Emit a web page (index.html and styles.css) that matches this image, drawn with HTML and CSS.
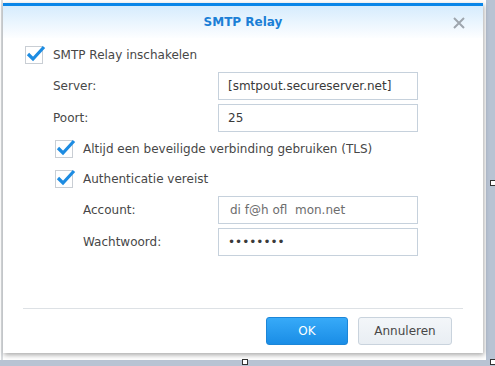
FILE: index.html
```html
<!DOCTYPE html>
<html lang="nl">
<head>
  <meta charset="UTF-8">
  <title>SMTP Relay</title>
  <link rel="stylesheet" href="styles.css">
</head>
<body>

<div class="desk">
  <!-- venster -->
  <div class="dialog">
    <div class="dialog-head">
      <span class="dialog-title">SMTP Relay</span>
      <span class="close">
        <svg width="14" height="14" viewBox="0 0 14 14"><path d="M2 2 L12 12 M12 2 L2 12" stroke="#9ea6ae" stroke-width="2" fill="none"/></svg>
      </span>
    </div>

    <div class="dialog-body">
      <label class="check-row">
        <span class="check"><svg width="22" height="20" viewBox="0 0 22 20"><path d="M3 10 L8 15 L19 3" stroke="#1d8ce2" stroke-width="3.2" fill="none"/></svg></span>
        SMTP Relay inschakelen
      </label>

      <div class="field first">
        <span class="field-label">Server:</span>
        <input class="field-input" type="text" value="[smtpout.secureserver.net]">
      </div>
      <div class="field">
        <span class="field-label">Poort:</span>
        <input class="field-input" type="text" value="25">
      </div>

      <label class="check-row sub tls">
        <span class="check"><svg width="22" height="20" viewBox="0 0 22 20"><path d="M3 10 L8 15 L19 3" stroke="#1d8ce2" stroke-width="3.2" fill="none"/></svg></span>
        Altijd een beveiligde verbinding gebruiken (TLS)
      </label>
      <label class="check-row sub auth">
        <span class="check"><svg width="22" height="20" viewBox="0 0 22 20"><path d="M3 10 L8 15 L19 3" stroke="#1d8ce2" stroke-width="3.2" fill="none"/></svg></span>
        Authenticatie vereist
      </label>

      <div class="field sub first">
        <span class="field-label">Account:</span>
        <input class="field-input blur" type="text" value="di f@h ofl  mon.net">
      </div>
      <div class="field sub">
        <span class="field-label">Wachtwoord:</span>
        <input class="field-input" type="text" value="••••••••">
      </div>
    </div>

    <div class="dialog-foot">
      <button class="btn btn-ok">OK</button>
      <button class="btn btn-cancel">Annuleren</button>
    </div>
  </div>

  <span class="handle h-mid"></span>
  <span class="handle h-right"></span>
  <span class="handle h-side"></span>
</div>

</body>
</html>
```

FILE: styles.css
```css
body {
  margin: 0;
  font-family: "DejaVu Sans", Verdana, sans-serif;
  font-size: 12px;
  color: #474747;
}
.desk {
  position: relative;
  width: 495px;
  height: 366px;
  overflow: hidden;
  box-sizing: border-box;
  padding: 3px 12px 0 3px;
  background:
    linear-gradient(#b8c3d3, #b8c3d3) right top / 9px 100% no-repeat,
    linear-gradient(#b8c3d3, #b8c3d3) left bottom / 100% 6px no-repeat,
    linear-gradient(#d9dcdf, #d9dcdf) 1px 0 / 2px 100% no-repeat,
    #fff;
}
.dialog {
  width: 480px;
  height: 350px;
  background: #fff;
  display: flex;
  flex-direction: column;
  box-shadow: 1px 2px 5px rgba(0, 0, 0, 0.35);
}
.dialog-head {
  position: relative;
  height: 32px;
  border-top: 3px solid #0a86e8;
  background: linear-gradient(#d6ecfd, #fdfeff);
  display: flex;
  align-items: center;
  justify-content: center;
}
.dialog-title {
  font-weight: bold;
  color: #1b7fd6;
  font-size: 12px;
  margin-left: 0;
}
.close {
  position: absolute;
  right: 17px;
  top: 10px;
  width: 14px;
  height: 14px;
}
.dialog-body {
  flex: 1;
  padding: 8px 0 0 22px;
}
.check-row {
  display: flex;
  align-items: center;
  height: 18px;
  gap: 10px;
}
.check {
  position: relative;
  width: 16px;
  height: 16px;
  border: 1px solid #c9ced4;
  background: #fff;
  flex: none;
}
.check svg {
  position: absolute;
  left: -1px;
  top: -3px;
}
.check-row.sub {
  padding-left: 30px;
}
.check-row.tls {
  margin-top: 8px;
}
.check-row.auth {
  margin-top: 12px;
}
.field {
  display: flex;
  align-items: center;
  height: 28px;
  margin-top: 4px;
  padding-left: 28px;
}
.field.first {
  margin-top: 8px;
}
.field-label {
  width: 165px;
  flex: none;
}
.field.sub {
  padding-left: 58px;
}
.field.sub .field-label {
  width: 135px;
}
.field-input {
  width: 200px;
  height: 28px;
  box-sizing: border-box;
  border: 1px solid #c6d1dc;
  padding: 0 9px;
  font-family: "DejaVu Sans", Verdana, sans-serif;
  font-size: 12px;
  color: #3a3a3a;
  background: #fff;
  outline: none;
}
.field-input.blur {
  padding-left: 11px;
  color: #6d6d6d;
}
.dialog-foot {
  margin: 0 20px;
  border-top: 1px solid #dde1e5;
  padding: 8px 11px 8px 0;
  display: flex;
  justify-content: flex-end;
  gap: 10px;
}
.btn {
  height: 28px;
  box-sizing: border-box;
  border-radius: 3px;
  font-family: "DejaVu Sans", Verdana, sans-serif;
  font-size: 12px;
  padding: 0;
}
.btn-ok {
  width: 82px;
  color: #fff;
  border: 1px solid #1c86d8;
  background: linear-gradient(#37aaf8, #1a8de6);
}
.btn-cancel {
  width: 94px;
  color: #474747;
  border: 1px solid #c9d3dd;
  background: linear-gradient(#f3f6f9, #e9eef3);
}
.handle {
  position: absolute;
  width: 4px;
  height: 4px;
  border: 1px solid #333;
  background: #fff;
}
.h-mid { left: 242px; top: 359px; }
.h-right { left: 490px; top: 359px; }
.h-side { left: 490px; top: 180px; }
```
